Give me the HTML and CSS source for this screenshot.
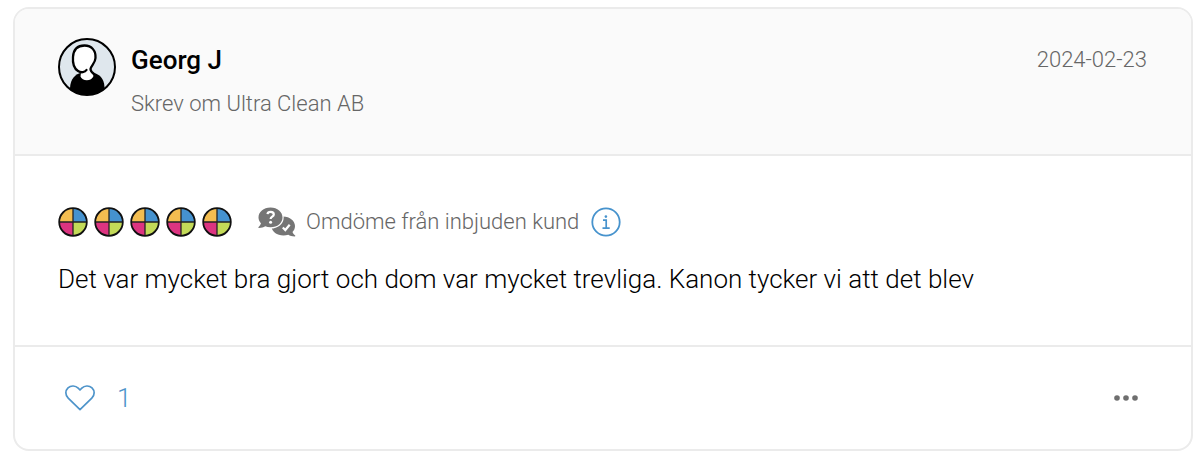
FILE: index.html
```html
<!DOCTYPE html>
<html lang="sv">
<head>
    <meta charset="UTF-8">
    <meta name="viewport" content="width=device-width, initial-scale=1.0">
    <title>Omdöme</title>
    <link rel="stylesheet" href="styles.css">
</head>
<body>
    <!-- Shared rating symbol -->
    <svg class="symbols" aria-hidden="true">
        <symbol id="wheel" viewBox="0 0 30 30">
            <path d="M15 15V1A14 14 0 0 0 1 15Z" fill="#f3bd50"/>
            <path d="M15 15H29A14 14 0 0 0 15 1Z" fill="#4592cf"/>
            <path d="M15 15V29A14 14 0 0 0 29 15Z" fill="#c3da58"/>
            <path d="M15 15H1A14 14 0 0 0 15 29Z" fill="#dc3480"/>
            <path d="M15 1V29M1 15H29" stroke="#222" stroke-width="1.3"/>
            <circle cx="15" cy="15" r="13.8" fill="none" stroke="#111" stroke-width="1.8"/>
        </symbol>
    </svg>

    <article class="review">
        <header class="review-header">
            <svg class="avatar" viewBox="0 0 58 58" aria-hidden="true">
                <clipPath id="avatar-clip"><circle cx="29" cy="29" r="28"/></clipPath>
                <circle cx="29" cy="29" r="28" fill="#dfe7ed"/>
                <g clip-path="url(#avatar-clip)">
                    <path d="M12 58V50C12.500 41 17 36 24 34.500H34C41 35.500 46 40 46.500 49V58Z" fill="#000"/>
                    <path d="M23 34C16 33 14.500 26 15 19C15.500 11 20 7.500 26.500 7.500C34 7.500 38 13 37.500 20C37.300 25 33 27 32.500 32C32.500 34 35 35.500 35.500 38C34 43.500 24 43.500 22.500 38.500Z" fill="#fff"/>
                    <path d="M28.500 32C27 34.500 23 35 20 33C15.500 30 14.500 25 15 19C15.500 11 20 7.500 26.500 7.500C34 7.500 38 13 37.500 20C37.300 25 33.500 27 32.500 31C32.500 33 34 34.500 36 36" fill="none" stroke="#000" stroke-width="2.300" stroke-linecap="round"/>
                </g>
                <circle cx="29" cy="29" r="28" fill="none" stroke="#000" stroke-width="2"/>
            </svg>
            <div class="author">
                <h2 class="author-name">Georg J</h2>
                <p class="author-about">Skrev om Ultra Clean AB</p>
            </div>
            <time class="date" datetime="2024-02-23">2024-02-23</time>
        </header>

        <div class="review-body">
            <div class="meta">
                <div class="rating" role="img" aria-label="5 av 5">
                    <svg><use href="#wheel"/></svg>
                    <svg><use href="#wheel"/></svg>
                    <svg><use href="#wheel"/></svg>
                    <svg><use href="#wheel"/></svg>
                    <svg><use href="#wheel"/></svg>
                </div>
                <svg class="chat-icon" viewBox="0 0 38 30" aria-hidden="true">
                    <path d="M25 9.500C32 9.500 37 14 37 19C37 21.500 36 23.500 34.500 25C35 26.500 36 27.500 37.200 28.500C37.500 29 37.200 29.400 36.700 29.400C34 29.400 31.800 28.600 30.300 27.700C22.500 30 13.500 26.500 13.500 19C13.500 14 18 9.500 25 9.500Z" fill="#757575"/>
                    <path d="M12.500 0.500C19.500 0.500 24.500 5 24.500 10.500C24.500 16 19.500 20.300 12.500 20.300C10.500 20.300 8.800 19.900 7.200 19.300C5.500 20.300 3.500 21 1 21C0.500 21 0.200 20.500 0.600 20C1.800 18.800 2.600 17.500 3 16.200C1.400 14.600 0.500 12.600 0.500 10.500C0.500 5 5.500 0.500 12.500 0.500Z" fill="#757575" stroke="#fff" stroke-width="2.400" paint-order="stroke"/>
                    <path d="M9.500 7.200C9.700 5.500 11 4.900 12.700 4.900C14.500 4.900 15.800 5.900 15.800 7.500C15.800 9.800 12.600 9.600 12.600 12" fill="none" stroke="#fff" stroke-width="2.200"/>
                    <circle cx="12.600" cy="15.200" r="1.500" fill="#fff"/>
                    <path d="M24.800 20.500L27.300 23L31.700 17.700" fill="none" stroke="#fff" stroke-width="2.200"/>
                </svg>
                <span class="source">Omdöme från inbjuden kund</span>
                <button class="icon-button info" type="button" aria-label="Mer information">
                    <svg viewBox="0 0 30 30">
                        <circle cx="15" cy="15" r="13.700" fill="none" stroke="#4793cd" stroke-width="1.800"/>
                        <path d="M12 13.200H15.200V21M11.500 21.200H18.700" fill="none" stroke="#4793cd" stroke-width="1.700"/>
                        <circle cx="14.900" cy="9.600" r="1.300" fill="#4793cd"/>
                    </svg>
                </button>
            </div>
            <p class="comment">Det var mycket bra gjort och dom var mycket trevliga. Kanon tycker vi att det blev</p>
        </div>

        <footer class="review-footer">
            <button class="icon-button like" type="button" aria-label="Gilla, 1">
                <svg viewBox="0 0 30 26">
                    <path d="M15 24.700L3.200 13.200C0 10 0.200 5.500 3 2.800C6 0.200 10.500 0.500 13.200 3.200L15 5L16.800 3.200C19.500 0.500 24 0.200 27 2.800C29.800 5.500 30 10 26.800 13.200Z" fill="none" stroke="#4e94ca" stroke-width="1.700" stroke-linejoin="round"/>
                </svg>
                <span>1</span>
            </button>
            <button class="icon-button more" type="button" aria-label="Fler val">
                <svg viewBox="0 0 24 6">
                    <circle cx="3" cy="3" r="2.800" fill="#6f6f6f"/>
                    <circle cx="12" cy="3" r="2.800" fill="#6f6f6f"/>
                    <circle cx="21" cy="3" r="2.800" fill="#6f6f6f"/>
                </svg>
            </button>
        </footer>
    </article>
</body>
</html>
```
FILE: styles.css
```css
body {
    margin: 7px 7px 7px 13px;
    background-color: #fff;
    color: #000;
    font-family: Roboto, sans-serif;
    font-size: 22px;
    font-weight: 300;
}
h2, p {
    margin: 0;
}
svg {
    display: block;
}
.symbols {
    display: none;
}
.review {
    border: 2px solid #ebebeb;
    border-radius: 16px;
    overflow: hidden;
}
.review-header {
    display: flex;
    align-items: flex-start;
    gap: 15px;
    padding: 29px 44px 32px 43px;
    background-color: #fafafa;
    border-bottom: 2px solid #ebebeb;
}
.avatar {
    width: 58px;
    height: 58px;
}
.author {
    flex: 1;
}
.author-name {
    font-size: 26px;
    font-weight: 500;
    line-height: 44px;
}
.author-about {
    margin-top: 4px;
    line-height: 36px;
    color: #666;
}
.date {
    line-height: 44px;
    color: #666;
}
.review-body {
    padding: 48px 43px 47px;
}
.meta {
    display: flex;
    align-items: center;
    line-height: 36px;
}
.rating {
    display: flex;
    gap: 6px;
}
.rating svg {
    width: 30px;
    height: 30px;
}
.chat-icon {
    width: 38px;
    height: 30px;
    margin: 0 10px 0 26px;
}
.source {
    color: #666;
}
.icon-button {
    display: flex;
    align-items: center;
    padding: 0;
    border: 0;
    background: none;
    font: inherit;
    cursor: pointer;
}
.info {
    margin-left: 12px;
}
.info svg {
    width: 30px;
    height: 30px;
}
.comment {
    margin-top: 20px;
    font-size: 26px;
    line-height: 38px;
}
.review-footer {
    display: flex;
    align-items: center;
    justify-content: space-between;
    padding: 32px 53px 32px 50px;
    border-top: 2px solid #ebebeb;
}
.like {
    gap: 22px;
    color: #4e94ca;
    font-size: 26px;
    line-height: 38px;
}
.like svg {
    width: 30px;
    height: 26px;
}
.more svg {
    width: 24px;
    height: 6px;
}
```
